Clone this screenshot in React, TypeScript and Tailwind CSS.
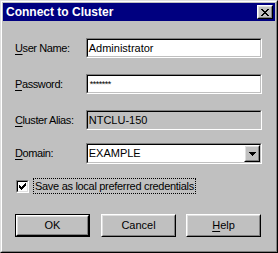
import React from "react";

const font = { fontFamily: '"Liberation Sans", Arial, sans-serif' };

function Sunken({ children, className = "", bg = "bg-white" }: { children?: React.ReactNode; className?: string; bg?: string }) {
  return (
    <div className={`border border-t-[#808080] border-l-[#808080] border-b-white border-r-white ${className}`}>
      <div className={`h-full border border-t-black border-l-black border-b-[#c0c0c0] border-r-[#c0c0c0] ${bg} flex items-center`}>
        {children}
      </div>
    </div>
  );
}

function Raised({ children, className = "" }: { children?: React.ReactNode; className?: string }) {
  return (
    <div className={`border border-t-white border-l-white border-b-black border-r-black bg-[#c0c0c0] ${className}`}>
      <div className="h-full border border-t-[#dfdfdf] border-l-[#dfdfdf] border-b-[#808080] border-r-[#808080] flex items-center justify-center">
        {children}
      </div>
    </div>
  );
}

function Label({ first, rest }: { first: string; rest: string }) {
  return (
    <div className="w-[71px] text-[11px] text-black leading-none tracking-[-0.4px]">
      <span className="underline underline-offset-[2px]">{first}</span>
      {rest}
    </div>
  );
}

export default function App() {
  return (
    <div style={font} className="w-[278px] h-[253px] bg-[#c0c0c0] border border-t-[#dfdfdf] border-l-[#dfdfdf] border-b-black border-r-black">
      <div className="h-full border border-t-white border-l-white border-b-[#808080] border-r-[#808080] p-px">
        <div className="h-[18px] bg-[#000080] flex items-center justify-between pl-[3px] pr-[2px]">
          <span className="text-white font-bold text-[12px] leading-none">Connect to Cluster</span>
          <Raised className="w-[16px] h-[14px]">
            <svg width="8" height="7" viewBox="0 0 8 7">
              <path d="M0 0h2v1h1v1h2V1h1V0h2v1H7v1H6v1H5v1h1v1h1v1h1v1H6V6H5V5H3v1H2v1H0V6h1V5h1V4h1V3H2V2H1V1H0z" fill="black" />
            </svg>
          </Raised>
        </div>
        <div className="pl-[12px] pr-[13px]">
          <div className="flex items-center mt-[17px]">
            <Label first="U" rest="ser Name:" />
            <Sunken className="w-[177px] h-[20px]">
              <span className="text-[11px] pl-[1px] leading-none">Administrator</span>
            </Sunken>
          </div>
          <div className="flex items-center mt-[16px]">
            <Label first="P" rest="assword:" />
            <Sunken className="w-[177px] h-[20px]">
              <span className="text-[9px] pl-[2px] leading-none tracking-[-0.5px]">*******</span>
            </Sunken>
          </div>
          <div className="flex items-center mt-[16px]">
            <Label first="C" rest="luster Alias:" />
            <Sunken className="w-[177px] h-[20px]" bg="bg-[#c0c0c0]">
              <span className="text-[11px] pl-[1px] leading-none">NTCLU-150</span>
            </Sunken>
          </div>
          <div className="flex items-center mt-[13px]">
            <Label first="D" rest="omain:" />
            <Sunken className="w-[177px] h-[21px]">
              <span className="text-[11px] pl-[1px] leading-none flex-1">EXAMPLE</span>
              <Raised className="w-[16px] h-[17px]">
                <svg width="7" height="4" viewBox="0 0 7 4">
                  <path d="M0 0h7v1H6v1H5v1H4v1H3V3H2V2H1V1H0z" fill="black" />
                </svg>
              </Raised>
            </Sunken>
          </div>
          <div className="flex items-center mt-[14px] h-[16px]">
            <div className="ml-[1px] w-[13px] h-[13px] border border-t-[#808080] border-l-[#808080] border-b-white border-r-white">
              <div className="w-full h-full border border-t-black border-l-black border-b-[#dfdfdf] border-r-[#dfdfdf] bg-white flex items-center justify-center">
                <svg width="7" height="7" viewBox="0 0 7 7">
                  <path d="M6 0h1v3H6v1H5v1H4v1H3v1H2V6H1V5H0V2h1v1h1v1h1V3h1V2h1V1h1z" fill="black" />
                </svg>
              </div>
            </div>
            <div className="ml-[4px] border border-dotted border-black px-[1px] h-[16px] flex items-center">
              <span className="text-[11px] leading-none tracking-[-0.3px]">Save as local preferred credentials</span>
            </div>
          </div>
          <div className="flex items-center mt-[20px]">
            <div className="border border-black">
              <Raised className="w-[73px] h-[21px]">
                <span className="text-[11px] leading-none">OK</span>
              </Raised>
            </div>
            <Raised className="ml-[11px] w-[75px] h-[23px]">
              <span className="text-[11px] leading-none">Cancel</span>
            </Raised>
            <Raised className="ml-[10px] w-[75px] h-[23px]">
              <span className="text-[11px] leading-none">
                <span className="underline underline-offset-[2px]">H</span>elp
              </span>
            </Raised>
          </div>
        </div>
      </div>
    </div>
  );
}
